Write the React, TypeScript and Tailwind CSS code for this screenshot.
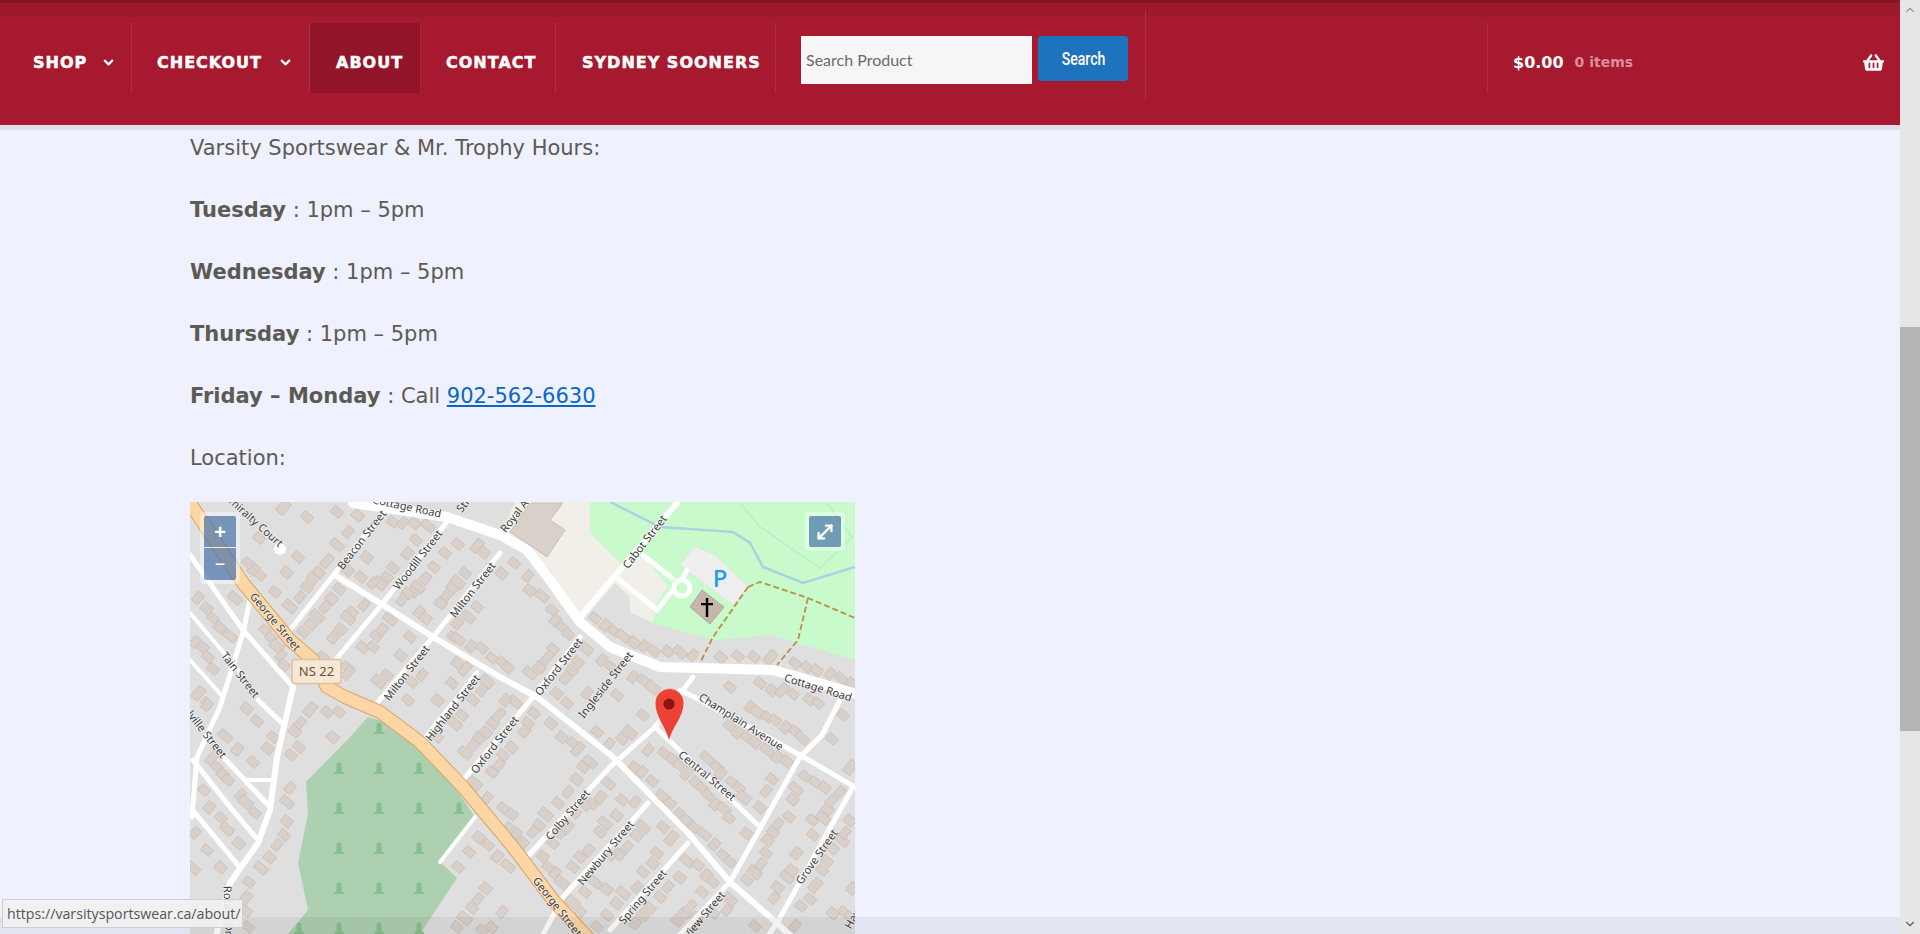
import { ChevronDown, ChevronUp, MoveDiagonal } from "lucide-react";
import { FaShoppingBasket } from "react-icons/fa";

const navItems = [
  { label: "SHOP", width: "w-[132px]", pad: "pl-[33px]", caret: true, gap: "gap-[14px]" },
  { label: "CHECKOUT", width: "w-[178px]", pad: "pl-[25px]", caret: true, gap: "gap-[16px]" },
  { label: "ABOUT", width: "w-[111px]", pad: "pl-[26px]", active: true },
  { label: "CONTACT", width: "w-[135px]", pad: "pl-[25px]" },
  { label: "SYDNEY SOONERS", width: "w-[220px]", pad: "pl-[26px]" },
];

const hours = [
  { day: "Tuesday", time: " : 1pm – 5pm" },
  { day: "Wednesday", time: " : 1pm – 5pm" },
  { day: "Thursday", time: " : 1pm – 5pm" },
];

// centres of the houses, in page coordinates (the svg viewBox uses the same ones)
const houses = [
  [283,507],[307,517],[337,512],[358,515],[348,532],[337,545],[367,557],[393,522],[403,523],[415,523],[428,526],[416,540],[407,553],[393,568],[387,577],[380,583],[373,583],[361,577],[348,570],[458,544],[477,546],[484,552],[445,553],[434,567],[425,578],[418,587],[413,592],[408,593],[402,600],[465,573],[458,582],[452,588],[447,595],[441,603],[477,607],[468,617],[457,623],[259,538],[298,557],[287,572],[327,561],[319,572],[313,578],[307,587],[300,597],[290,606],[275,592],[260,575],[253,569],[248,563],[235,598],[207,608],[198,598],[213,618],[220,627],[230,636],[195,642],[203,647],[208,657],[213,669],[198,693],[207,703],
  [339,589],[332,598],[325,607],[317,616],[311,624],[303,632],[364,605],[352,612],[348,618],[341,629],[333,637],[265,630],[271,638],[277,646],[281,656],[284,665],[323,657],[347,667],[348,673],[363,647],[373,647],[376,636],[382,629],[390,619],[410,637],[401,655],[422,675],[387,675],[379,681],[412,682],[419,612],[426,618],[453,637],[458,639],[471,646],[482,648],[492,658],[458,663],[465,669],[452,683],[438,700],[473,700],[482,690],[487,681],[408,700],
  [595,618],[605,625],[614,631],[623,636],[634,642],[644,646],[654,651],[668,651],[680,652],[693,655],[721,657],[738,656],[754,657],[770,657],[795,663],[807,667],[817,670],[830,674],[842,679],[852,683],[514,563],[528,576],[530,590],[542,596],[552,610],[555,620],[562,627],[568,634],[586,648],[602,660],[611,667],[502,573],[553,649],[547,658],[540,667],[578,662],[572,670],[565,678],[530,673],[502,662],[508,667],[633,677],[643,680],[653,687],[617,695],[587,693],[557,693],[567,703],[515,702],[505,700],[730,687],[760,683],[772,690],[782,690],[793,694],[810,699],[818,703],
  [750,707],[758,712],[767,717],[775,720],[785,727],[795,731],[802,738],[730,725],[738,733],[747,737],[755,742],[767,750],[777,757],[787,761],[843,715],[832,739],[850,767],[805,776],[815,782],[825,787],[840,792],[796,789],[793,799],[772,779],[766,791],[760,807],[707,758],[717,767],[720,773],[732,782],[739,788],[744,797],[648,750],[664,753],[673,759],[679,765],[687,773],[696,782],[702,788],[708,795],[715,804],[724,809],[729,818],[635,767],[642,772],[652,781],[663,796],[670,803],[678,814],[687,820],[694,827],[704,834],[714,844],[723,855],[730,862],[747,833],[777,825],[773,832],[768,840],[766,853],[761,864],[755,872],[747,880],[789,817],[796,853],[812,820],[823,818],[828,809],[831,801],[813,835],[833,848],[842,840],[845,833],[850,820],[827,861],[822,870],[815,885],[810,899],[801,906],[778,887],[774,898],[787,877],[792,870],[755,926],[795,926],[833,913],[845,913],[850,917],[852,888],
  [643,715],[622,739],[630,732],[609,744],[597,732],[562,737],[573,743],[578,749],[551,723],[534,713],[528,723],[524,731],[590,762],[583,767],[577,779],[568,792],[558,803],[546,814],[539,825],[533,832],[523,842],[553,843],[608,783],[600,797],[592,804],[585,805],[575,812],[567,828],[559,833],[543,856],[548,867],[555,873],[562,882],[573,867],[580,857],[588,850],[600,832],[605,823],[617,815],[635,802],[622,800],[637,835],[643,827],[627,847],[619,854],[610,855],[663,827],[671,838],[657,853],[643,872],[653,863],[637,887],[623,893],[617,903],[660,897],[668,887],[680,877],[687,861],[698,865],[706,875],[713,882],[702,892],[730,899],[727,910],[713,913],[697,917],[685,913],[690,907],[678,920],[650,908],[643,915],[635,923],[595,882],[585,892],[607,889],[580,913],[597,927],[573,902],[607,915],
  [207,705],[247,708],[257,721],[225,736],[237,749],[253,762],[273,737],[268,748],[212,758],[217,767],[223,774],[228,780],[241,795],[246,802],[255,813],[204,790],[209,807],[221,818],[227,829],[239,843],[195,833],[207,850],[221,867],[193,868],[300,723],[295,731],[299,747],[291,755],[310,709],[327,712],[339,712],[333,737],[290,788],[287,802],[287,821],[284,835],[277,845],[270,857],[261,868],[249,882],[246,897],[246,911],[248,927],
  [475,783],[487,798],[503,808],[512,814],[510,828],[515,835],[479,837],[488,845],[469,852],[497,856],[508,866],[458,867],[486,888],[478,899],[472,908],[465,918],[457,927],[502,912],[492,927],[482,930],[465,753],[473,745],[479,738],[486,732],[493,723],[499,715],[503,755],[512,747],[492,772],[499,765],[455,723],[462,715],[437,737],
];

const roads: [string, number][] = [
  ["M353 503 L447 517 L500 535 L527 550 L550 580 L580 622 L610 647 L660 667 L773 670 L860 695", 10],
  ["M383 513 L335 573 L290 630", 5],
  ["M447 522 L383 603 L337 658", 5],
  ["M500 553 L433 637 L377 703", 5],
  ["M335 575 L383 605 L433 637 L500 677 L537 697 L570 723 L613 757 L688 833 L730 882 L777 923 L805 950", 6],
  ["M190 555 L243 630 L293 687", 5],
  ["M190 613 L240 672", 4],
  ["M190 660 L223 697", 4],
  ["M250 600 L243 633 L220 707 L197 757 L192 817", 5],
  ["M293 687 L277 757 L270 810 L258 843 L230 883 L215 940", 6],
  ["M258 700 L282 723", 5],
  ["M223 757 L270 807", 5],
  ["M248 780 L273 780", 4],
  ["M193 760 L230 807 L258 840", 5],
  ["M190 807 L238 865", 5],
  ["M677 503 L580 617", 6],
  ["M617 578 L657 610 L673 590", 5],
  ["M643 555 L672 578", 5],
  ["M687 570 L682 580", 5],
  ["M580 637 L533 697 L463 780", 5],
  ["M477 673 L425 738", 5],
  ["M693 677 L655 727", 5],
  ["M655 727 L610 767 L527 857", 5],
  ["M648 803 L563 897 L540 940", 5],
  ["M688 843 L610 930", 5],
  ["M840 700 L822 735 L800 757 L730 882 L670 945", 5],
  ["M655 727 L760 827", 5],
  ["M680 690 L700 700 L800 755 L860 790", 5],
  ["M853 787 L777 923 L765 940", 5],
  ["M475 817 L440 862", 4],
];

const labels: [string, number, number, number, string?][] = [
  ["Cottage Road", 407, 507, 12],
  ["Admiralty Court", 281, 545, 42, "end"],
  ["Beacon Street", 362, 540, -52],
  ["Woodill Street", 418, 560, -52],
  ["Milton Street", 473, 590, -52],
  ["Milton Street", 407, 673, -52],
  ["George Street", 275, 622, 50],
  ["Tain Street", 240, 675, 52],
  ["Melville Street", 224, 757, 52, "end"],
  ["Highland Street", 453, 708, -52],
  ["Oxford Street", 559, 667, -52],
  ["Oxford Street", 495, 745, -52],
  ["Ingleside Street", 606, 685, -52],
  ["Cabot Street", 645, 542, -52],
  ["Royal Avenue", 503, 531, -52, "start"],
  ["Street", 459, 511, -52, "start"],
  ["Cottage Road", 818, 688, 17],
  ["Champlain Avenue", 741, 722, 32],
  ["Central Street", 707, 776, 40],
  ["Colby Street", 568, 815, -50],
  ["Newbury Street", 606, 853, -50],
  ["Spring Street", 643, 897, -50],
  ["George Street", 557, 907, 52],
  ["View Street", 723, 893, -50, "end"],
  ["Grove Street", 817, 857, -55],
  ["Rotary Drive", 227, 886, 88, "start"],
  ["Hawthorne", 848, 928, -62, "start"],
];

const graves = [
  [379, 728],
  ...[339, 379, 419, 459].map((x) => [x, 808]),
  ...[339, 379, 419].flatMap((x) => [[x, 768], [x, 848], [x, 888]]),
  ...[299, 339, 379, 419].map((x) => [x, 928]),
];

const georgeStreet = "M188 500 L243 583 L290 640 L313 660 L327 687 L345 697 L380 712 L420 742 L463 787 L513 847 L553 900 L590 940";

function MapDrawing() {
  return (
    <svg viewBox="190 502 665 432" className="block w-[665px] h-[432px]">
      <rect x="190" y="502" width="665" height="432" fill="#e0dfdf" />
      <path d="M590 502 L855 502 L855 660 L770 635 L713 640 L653 623 L630 603 L625 570 L590 533Z" fill="#c8facc" />
      <path d="M515 502 L590 502 L590 533 L620 563 L643 556 L668 586 L655 605 L653 623 L630 612 L630 597 L615 583 L583 620 L550 570 L500 535Z" fill="#f2efe9" />
      <path d="M740 503 L760 527 L820 568 L852 537 L827 503" fill="none" stroke="#b2e6bd" strokeWidth="1" />
      <path d="M610 502 L660 527 L733 532 L750 543 L763 567 L803 583 L855 567" fill="none" stroke="#aad3df" strokeWidth="2.5" />
      <path d="M530 503 L563 503 L550 520 L565 530 L547 557 L510 532Z" fill="#d9d0c9" stroke="#c9bdb3" />
      <path d="M695 546 L710 553 L713 553 L748 587 L733 605 L680 565Z" fill="#eeeeee" stroke="#e4e4e4" />
      <path d="M702 590 L724 607 L710 624 L690 607Z" fill="#c4b6ab" stroke="#b5a698" />
      <path d="M748 587 L760 582 L808 598 L855 618" fill="none" stroke="#b88f45" strokeWidth="1.8" strokeDasharray="6 3" />
      <path d="M748 587 L713 637 L700 663" fill="none" stroke="#b88f45" strokeWidth="1.8" strokeDasharray="6 3" />
      <path d="M808 598 L798 640 L777 665" fill="none" stroke="#b88f45" strokeWidth="1.8" strokeDasharray="6 3" />
      <path d="M368 717 L350 737 L306 782 L308 813 L298 863 L308 910 L288 934 L420 934 L457 878 L440 862 L475 817 L427 747 L385 722Z" fill="#add0b0" />
      {graves.map(([x, y], i) => (
        <path key={i} d={`M${x - 5} ${y + 6} H${x + 5} V${y + 4.5} L${x + 2.5} ${y + 3} V${y - 3} A2.5 2.5 0 0 0 ${x - 2.5} ${y - 3} V${y + 3} L${x - 5} ${y + 4.5}Z`} fill="#88bf90" />
      ))}
      {houses.map(([x, y], i) => (
        <rect
          key={i}
          x={x - (i % 5 === 0 ? 7 : 5.5)}
          y={y - 4}
          width={i % 5 === 0 ? 14 : 11}
          height={i % 3 === 0 ? 9 : 8}
          fill="#d9d0c9"
          stroke="#c9bdb3"
          strokeWidth="0.8"
          transform={`rotate(${i % 4 === 0 ? -50 : 40} ${x} ${y})`}
        />
      ))}
      {roads.map(([d, w], i) => (
        <path key={i} d={d} fill="none" stroke="#ffffff" strokeWidth={w} strokeLinejoin="round" strokeLinecap="round" />
      ))}
      <circle cx="280" cy="549" r="6" fill="#ffffff" />
      <circle cx="682" cy="588" r="8" fill="#c8facc" stroke="#ffffff" strokeWidth="5" />
      <path d={georgeStreet} fill="none" stroke="#d9a468" strokeWidth="14" strokeLinejoin="round" />
      <path d={georgeStreet} fill="none" stroke="#fcd6a4" strokeWidth="12" strokeLinejoin="round" />
      {labels.map(([text, x, y, angle, anchor], i) => (
        <text
          key={i}
          x={x}
          y={y + 3.5}
          textAnchor={(anchor as "start" | "end") ?? "middle"}
          transform={`rotate(${angle} ${x} ${y})`}
          fontFamily="'Noto Sans', sans-serif"
          fontSize="11"
          fill="#3c3c3c"
          stroke="#ffffff"
          strokeOpacity="0.6"
          strokeWidth="1.5"
          style={{ paintOrder: "stroke" }}
        >
          {text}
        </text>
      ))}
      <rect x="292" y="659.5" width="49" height="24" rx="3" fill="#f6e8d4" stroke="#dcc49e" strokeWidth="1.5" />
      <text x="316.5" y="676" textAnchor="middle" fontFamily="'Noto Sans', sans-serif" fontSize="13" fill="#6b5330">NS 22</text>
      <text x="720" y="587" textAnchor="middle" fontFamily="'Noto Sans', sans-serif" fontSize="24" fontWeight="500" fill="#1a9ee6">P</text>
      <path d="M705.8 598 H708.2 V603 H713 V605.2 H708.2 V617 H705.8 V605.2 H701 V603 H705.8Z" fill="#000000" />
      <path d="M669 741 C665 726 655 717 655 703 A14.5 14.5 0 0 1 684 703 C684 717 673 726 669 741Z" fill="#ea4335" stroke="#ffffff" strokeOpacity="0.6" strokeWidth="1" />
      <circle cx="669" cy="704" r="5.5" fill="#8a1410" />
    </svg>
  );
}

export default function App() {
  return (
    <div className="relative flex h-[934px] w-[1920px] overflow-hidden bg-[#eff1fe] font-['DejaVu_Sans',sans-serif]">
      <div className="w-[1900px]">
        <header className="h-[125px] bg-[#a6192e]">
          <div className="h-[17px] border-t-[3px] border-[#861528] bg-[#9c1a2c]" />
          <div className="flex items-start pt-[6px]">
            {navItems.map((item) => (
              <div
                key={item.label}
                className={`flex h-[70px] items-center border-r border-white/10 pt-[9px] ${item.width} ${item.pad} ${item.gap ?? ""} ${item.active ? "bg-[#911428]" : ""}`}
              >
                <span className="text-[16px] font-bold tracking-[1px] text-white [-webkit-text-stroke:0.5px_white]">{item.label}</span>
                {item.caret && <ChevronDown size={15} strokeWidth={3.5} className="text-white" />}
              </div>
            ))}
            <div className="-mt-[13px] flex h-[90px] w-[370px] items-start gap-[6px] border-r border-white/10 pl-[25px] pt-[26px]">
              <div className="flex h-[48px] w-[231px] items-center bg-[#f6f6f6] pl-[5px] font-['Lato',sans-serif] text-[16px] text-[#6b6b6b]">
                Search Product
              </div>
              <button className="flex h-[45px] w-[90px] items-center justify-center rounded-[3px] bg-[#1e73be] pt-[2px] font-['Roboto',sans-serif] text-[19px] font-medium text-white">
                <span className="inline-block scale-x-[0.74]">Search</span>
              </button>
            </div>
            <div className="ml-[341px] flex h-[70px] flex-1 items-center justify-between border-l border-white/10 pl-[25px] pr-[16px] pt-[9px]">
              <div className="flex items-center gap-[11px]">
                <span className="text-[16px] font-bold text-white">$0.00</span>
                <span className="text-[14px] font-bold text-[#d98f9b]">0 items</span>
              </div>
              <FaShoppingBasket size={21} className="text-white" />
            </div>
          </div>
        </header>
        <div className="h-[5px] bg-[#dde0ec]" />
        <main className="pl-[190px] pt-[3px] text-[21px] leading-[30px] text-[#5c5a55]">
          <p className="mb-[32px]">Varsity Sportswear &amp; Mr. Trophy Hours:</p>
          {hours.map((row) => (
            <p key={row.day} className="mb-[32px]">
              <strong className="font-bold">{row.day}</strong>
              {row.time}
            </p>
          ))}
          <p className="mb-[32px]">
            <strong className="font-bold">Friday – Monday</strong> : Call{" "}
            <a href="#" className="text-[#0a67c9] underline">902-562-6630</a>
          </p>
          <p className="mb-[29px]">Location:</p>
          <div className="relative h-[432px] w-[665px]">
            <MapDrawing />
            <div className="absolute left-[10px] top-[10px] flex flex-col gap-[1px] rounded-[4px] bg-white/40 p-[4px]">
              <div className="flex h-[31px] w-[32px] items-center justify-center rounded-t-[2px] bg-[#003c88]/50 font-['Liberation_Sans',sans-serif] text-[20px] font-bold leading-none text-white">+</div>
              <div className="flex h-[32px] w-[32px] items-center justify-center rounded-b-[2px] bg-[#003c88]/50 font-['Liberation_Sans',sans-serif] text-[18px] leading-none text-white">−</div>
            </div>
            <div className="absolute right-[10px] top-[10px] rounded-[4px] bg-white/40 p-[4px]">
              <div className="flex h-[31px] w-[32px] items-center justify-center rounded-[2px] bg-[#003c88]/50 text-white">
                <MoveDiagonal size={22} strokeWidth={2.5} />
              </div>
            </div>
          </div>
        </main>
      </div>
      <aside className="flex w-[20px] flex-col bg-[#e6e6e6]">
        <div className="flex h-[327px] justify-center pt-[3px]">
          <ChevronUp size={14} className="text-[#a0a0a0]" />
        </div>
        <div className="h-[404px] bg-[#b5b5b5]" />
        <div className="flex flex-1 items-end justify-center pb-[3px]">
          <ChevronDown size={14} className="text-[#606060]" />
        </div>
      </aside>
      <div className="absolute bottom-0 left-0 h-[17px] w-[1900px] bg-black/5" />
      <div className="absolute left-[2px] top-[899px] flex h-[29px] w-[241px] items-center border border-[#cfcfcf] bg-[#f1f1f1]/90 pl-[4px] font-['Open_Sans',sans-serif] text-[14.2px] text-[#555555]">
        https://varsitysportswear.ca/about/
      </div>
    </div>
  );
}
